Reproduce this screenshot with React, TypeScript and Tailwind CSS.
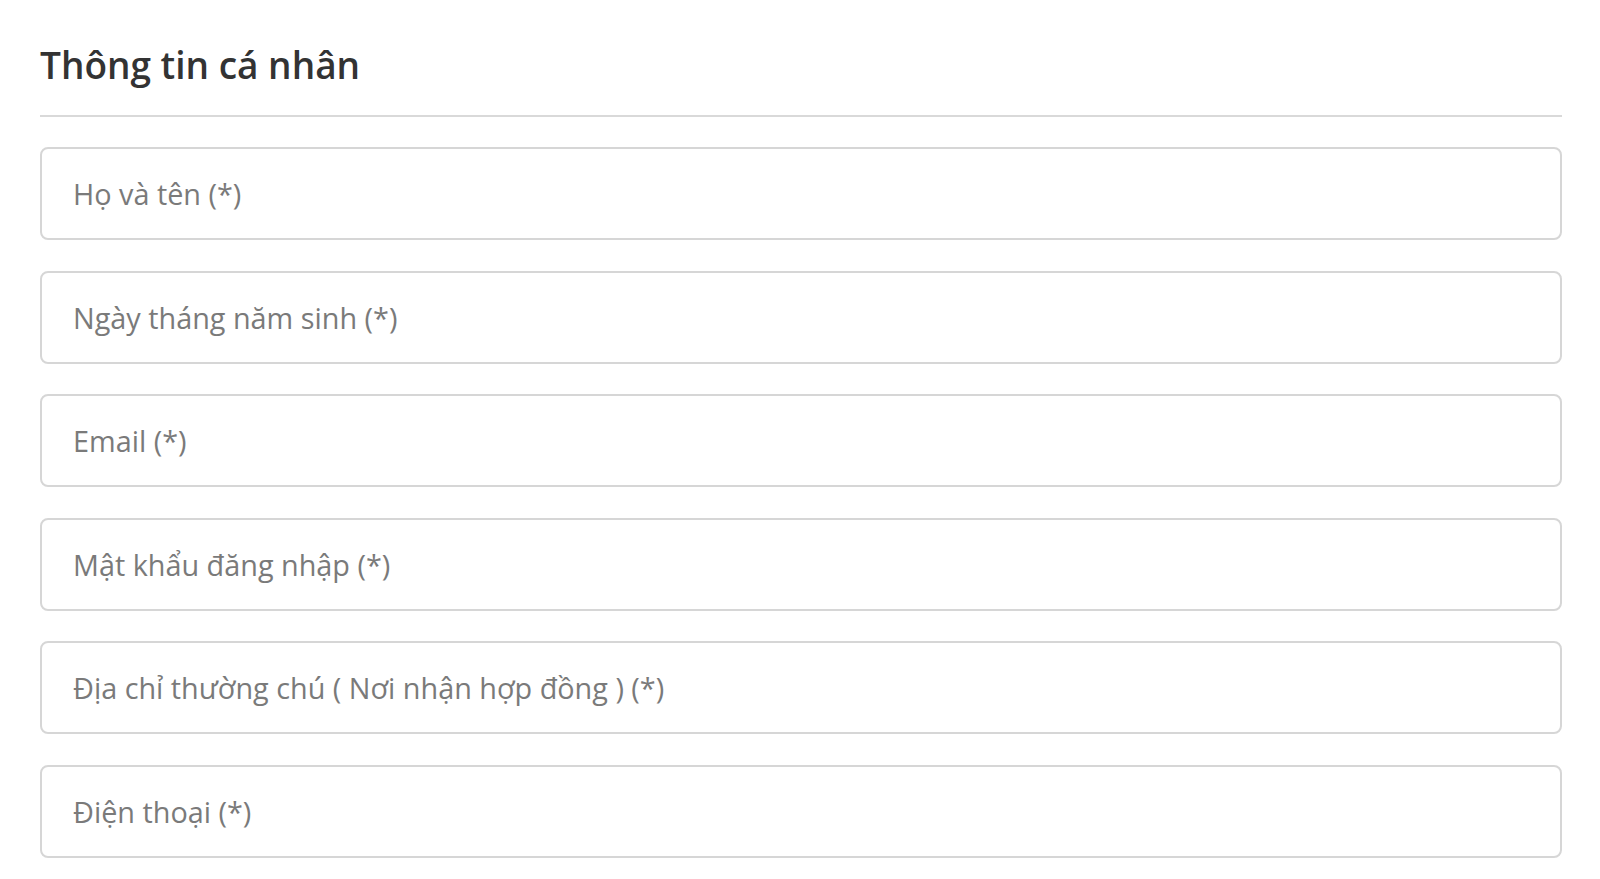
import React from "react";

const fields = [
  "Họ và tên (*)",
  "Ngày tháng năm sinh (*)",
  "Email (*)",
  "Mật khẩu đăng nhập (*)",
  "Địa chỉ thường chú ( Nơi nhận hợp đồng ) (*)",
  "Điện thoại (*)",
];

export default function App() {
  return (
    <div className="min-h-screen bg-white pl-10 pr-[38px] pt-[38px] font-['Open_Sans',sans-serif]">
      <h2 className="text-[37px] font-semibold leading-[54px] text-[#333333]">
        Thông tin cá nhân
      </h2>
      <div className="mt-[23px] h-[2px] bg-[#d9d9d9]" />
      <form className="mt-[30px] flex flex-col gap-[30.5px]">
        {fields.map((f) => (
          <input
            key={f}
            type="text"
            placeholder={f}
            className="h-[93px] w-full rounded-lg border-2 border-[#d6d6d6] bg-white px-[31px] text-[28.8px] text-[#333] placeholder:text-[#7a7a7a] outline-none"
          />
        ))}
      </form>
    </div>
  );
}
